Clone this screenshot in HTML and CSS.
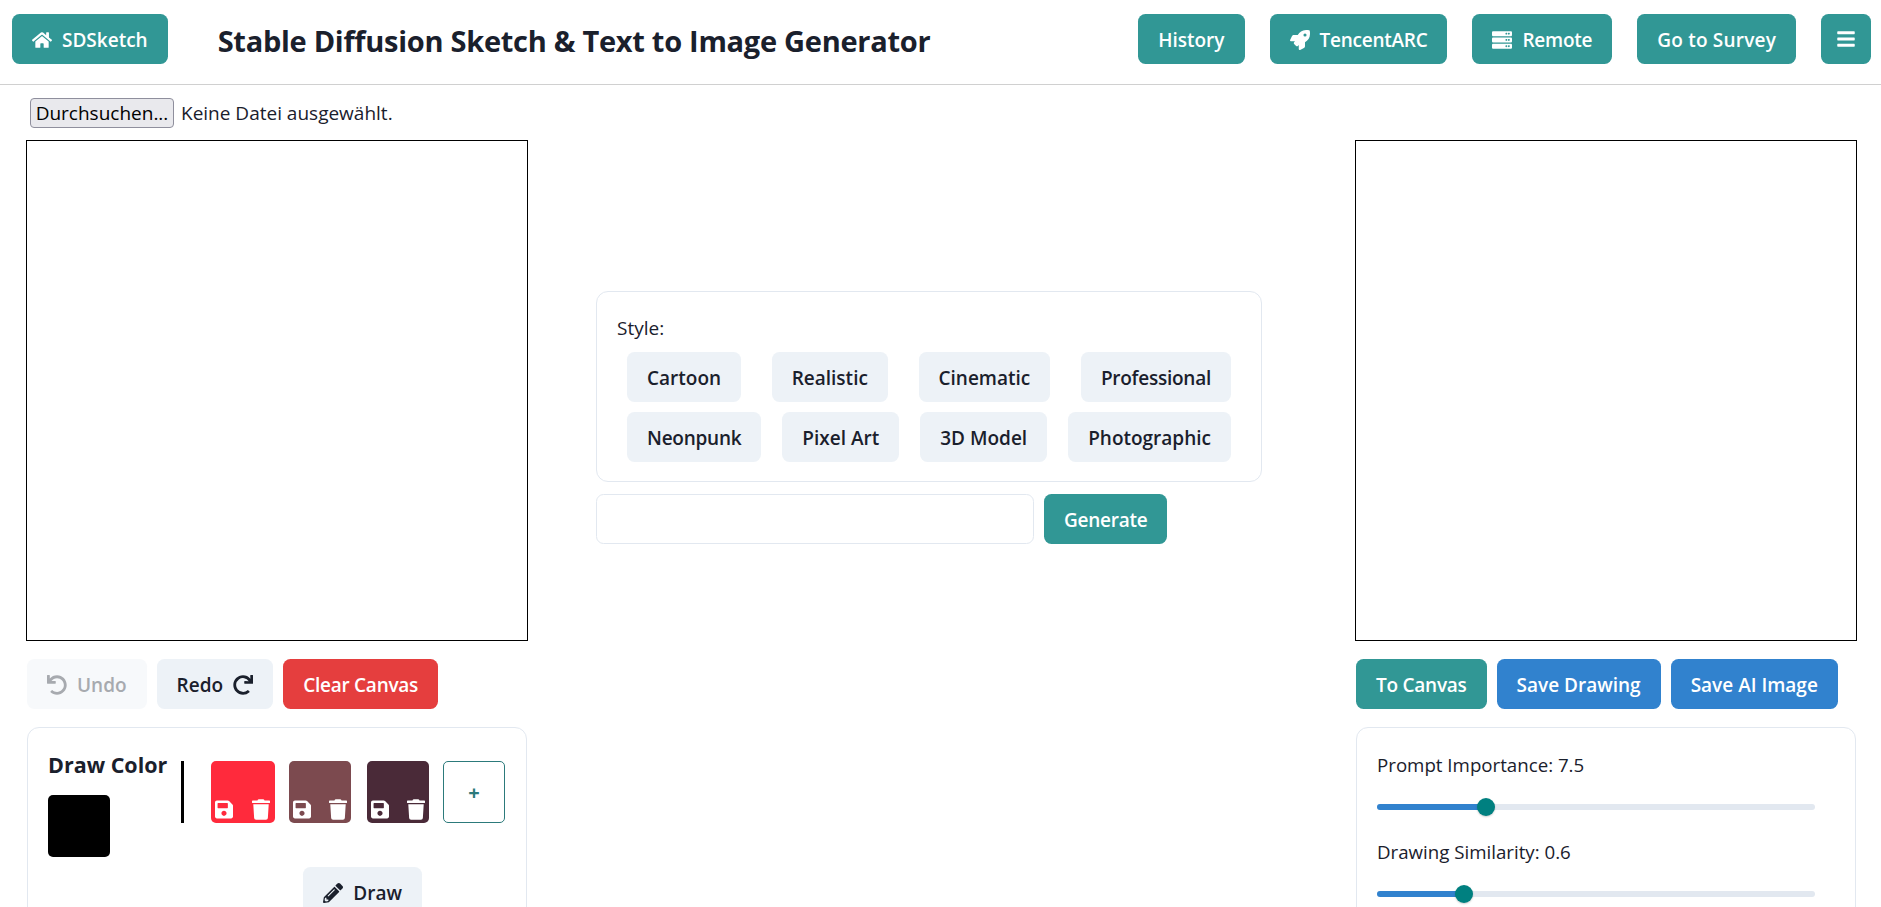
FILE: index.html
```html
<!DOCTYPE html>
<html lang="en">
<head>
<meta charset="utf-8">
<title>SDSketch</title>
<link rel="stylesheet" href="styles.css">
</head>
<body>
<nav class="navbar">
  <div class="nav-left">
    <button class="btn teal"><svg class="ico ico-home" viewBox="0 0 576 512"><path d="M280.37 148.26L96 300.11V464a16 16 0 0 0 16 16l112.06-.29a16 16 0 0 0 15.92-16V368a16 16 0 0 1 16-16h64a16 16 0 0 1 16 16v95.64a16 16 0 0 0 16 16.05L464 480a16 16 0 0 0 16-16V300L295.67 148.26a12.19 12.19 0 0 0-15.3 0zM571.6 251.47L488 182.56V44.05a12 12 0 0 0-12-12h-56a12 12 0 0 0-12 12v72.61L318.47 43a48 48 0 0 0-61 0L4.34 251.47a12 12 0 0 0-1.6 16.9l25.5 31A12 12 0 0 0 45.15 301l235.22-193.74a12.19 12.19 0 0 1 15.3 0L530.9 301a12 12 0 0 0 16.9-1.6l25.5-31a12 12 0 0 0-1.7-16.93z"/></svg>SDSketch</button>
    <h1 class="title">Stable Diffusion Sketch &amp; Text to Image Generator</h1>
  </div>
  <div class="nav-right">
    <button class="btn teal">History</button>
    <button class="btn teal tight"><svg class="ico" viewBox="0 0 512 512"><path d="M505.12019,19.09375c-1.18945-5.53125-6.65819-11-12.207-12.1875C460.716,0,435.507,0,410.40747,0,307.17523,0,245.26909,55.20312,199.05238,128H94.83772c-16.34763.01562-35.55658,11.875-42.88664,26.48438L2.51562,253.29688A28.4,28.4,0,0,0,0,264a24.00867,24.00867,0,0,0,24.00582,24H127.81618l-22.47457,22.46875c-11.36521,11.36133-12.99607,32.25781,0,45.25L156.24582,406.625c11.15623,11.1875,32.15619,13.15625,45.27726,0l22.47457-22.46875V488a24.00867,24.00867,0,0,0,24.00581,24,28.55934,28.55934,0,0,0,10.707-2.51562l98.72834-49.39063c14.62888-7.29687,26.50776-26.5,26.50776-42.85937V312.79688c72.59753-46.3125,128.03493-108.40626,128.03493-211.09376C512.07526,76.5,512.07526,51.29688,505.12019,19.09375ZM384.04033,168A40,40,0,1,1,424.05,128,40.02322,40.02322,0,0,1,384.04033,168Z"/></svg>TencentARC</button>
    <button class="btn teal tight"><svg class="ico" viewBox="0 0 512 512"><path d="M480 160H32c-17.673 0-32-14.327-32-32V64c0-17.673 14.327-32 32-32h448c17.673 0 32 14.327 32 32v64c0 17.673-14.327 32-32 32zm-48-88c-13.255 0-24 10.745-24 24s10.745 24 24 24 24-10.745 24-24-10.745-24-24-24zm-64 0c-13.255 0-24 10.745-24 24s10.745 24 24 24 24-10.745 24-24-10.745-24-24-24zm112 248H32c-17.673 0-32-14.327-32-32v-64c0-17.673 14.327-32 32-32h448c17.673 0 32 14.327 32 32v64c0 17.673-14.327 32-32 32zm-48-88c-13.255 0-24 10.745-24 24s10.745 24 24 24 24-10.745 24-24-10.745-24-24-24zm-64 0c-13.255 0-24 10.745-24 24s10.745 24 24 24 24-10.745 24-24-10.745-24-24-24zm112 248H32c-17.673 0-32-14.327-32-32v-64c0-17.673 14.327-32 32-32h448c17.673 0 32 14.327 32 32v64c0 17.673-14.327 32-32 32zm-48-88c-13.255 0-24 10.745-24 24s10.745 24 24 24 24-10.745 24-24-10.745-24-24-24zm-64 0c-13.255 0-24 10.745-24 24s10.745 24 24 24 24-10.745 24-24-10.745-24-24-24z"/></svg>Remote</button>
    <button class="btn teal wide">Go to Survey</button>
    <button class="btn teal btn-menu"><svg class="ico-bars" viewBox="0 0 448 512"><path d="M16 132h416c8.837 0 16-7.163 16-16V76c0-8.837-7.163-16-16-16H16C7.163 60 0 67.163 0 76v40c0 8.837 7.163 16 16 16zm0 160h416c8.837 0 16-7.163 16-16v-40c0-8.837-7.163-16-16-16H16c-8.837 0-16 7.163-16 16v40c0 8.837 7.163 16 16 16zm0 160h416c8.837 0 16-7.163 16-16v-40c0-8.837-7.163-16-16-16H16c-8.837 0-16 7.163-16 16v40c0 8.837 7.163 16 16 16z"/></svg></button>
  </div>
</nav>

<div class="file-row">
  <button class="file-btn">Durchsuchen...</button>
  <span class="file-label">Keine Datei ausgewählt.</span>
</div>

<main class="workspace">
  <section class="col">
    <div class="canvas"></div>
    <div class="btn-row">
      <button class="btn disabled"><svg class="ico" viewBox="0 0 512 512"><path d="M212.333 224.333H12c-6.627 0-12-5.373-12-12V12C0 5.373 5.373 0 12 0h48c6.627 0 12 5.373 12 12v78.112C117.773 39.279 184.26 7.47 258.175 8.007c136.906.994 246.448 111.623 246.157 248.532C504.041 393.258 393.12 504 256.333 504c-64.089 0-122.496-24.313-166.51-64.215-5.099-4.622-5.334-12.554-.467-17.42l33.967-33.967c4.474-4.474 11.662-4.717 16.401-.525C170.76 415.336 211.58 432 256.333 432c97.268 0 176-78.716 176-176 0-97.267-78.716-176-176-176-58.496 0-110.28 28.476-142.274 72.333h98.274c6.627 0 12 5.373 12 12v48c0 6.627-5.373 12-12 12z"/></svg>Undo</button>
      <button class="btn gray">Redo<svg class="ico ico-after" viewBox="0 0 512 512"><path d="M500.33 0h-47.41a12 12 0 0 0-12 12.57l4 82.76A247.42 247.42 0 0 0 256 8C119.34 8 7.9 119.53 8 256.19 8.1 393.07 119.1 504 256 504a247.1 247.1 0 0 0 166.18-63.91 12 12 0 0 0 .48-17.43l-34-34a12 12 0 0 0-16.38-.55A176 176 0 1 1 402.1 157.8l-101.53-4.87a12 12 0 0 0-12.57 12v47.41a12 12 0 0 0 12 12h200.33a12 12 0 0 0 12-12V12a12 12 0 0 0-12-12z"/></svg></button>
      <button class="btn red tight">Clear Canvas</button>
    </div>
    <div class="card draw-card">
      <div class="draw-top">
        <div class="draw-color">
          <div class="draw-title">Draw Color</div>
          <div class="swatch black"></div>
        </div>
        <div class="divider"></div>
        <div class="swatch saved s1"><svg class="mini" viewBox="0 0 448 512"><path d="M433.941 129.941l-83.882-83.882A48 48 0 0 0 316.118 32H48C21.49 32 0 53.49 0 80v352c0 26.51 21.49 48 48 48h352c26.51 0 48-21.49 48-48V163.882a48 48 0 0 0-14.059-33.941zM224 416c-35.346 0-64-28.654-64-64 0-35.346 28.654-64 64-64s64 28.654 64 64c0 35.346-28.654 64-64 64zm96-304.52V212c0 6.627-5.373 12-12 12H76c-6.627 0-12-5.373-12-12V108c0-6.627 5.373-12 12-12h228.52c3.183 0 6.235 1.264 8.485 3.515l3.48 3.48A11.996 11.996 0 0 1 320 111.48z"/></svg><svg class="mini" viewBox="0 0 448 512"><path d="M432 32H312l-9.4-18.7A24 24 0 0 0 281.1 0H166.8a23.72 23.72 0 0 0-21.4 13.3L136 32H16A16 16 0 0 0 0 48v32a16 16 0 0 0 16 16h416a16 16 0 0 0 16-16V48a16 16 0 0 0-16-16zM53.2 467a48 48 0 0 0 47.9 45h245.8a48 48 0 0 0 47.9-45L416 128H32z"/></svg></div>
        <div class="swatch saved s2"><svg class="mini" viewBox="0 0 448 512"><path d="M433.941 129.941l-83.882-83.882A48 48 0 0 0 316.118 32H48C21.49 32 0 53.49 0 80v352c0 26.51 21.49 48 48 48h352c26.51 0 48-21.49 48-48V163.882a48 48 0 0 0-14.059-33.941zM224 416c-35.346 0-64-28.654-64-64 0-35.346 28.654-64 64-64s64 28.654 64 64c0 35.346-28.654 64-64 64zm96-304.52V212c0 6.627-5.373 12-12 12H76c-6.627 0-12-5.373-12-12V108c0-6.627 5.373-12 12-12h228.52c3.183 0 6.235 1.264 8.485 3.515l3.48 3.48A11.996 11.996 0 0 1 320 111.48z"/></svg><svg class="mini" viewBox="0 0 448 512"><path d="M432 32H312l-9.4-18.7A24 24 0 0 0 281.1 0H166.8a23.72 23.72 0 0 0-21.4 13.3L136 32H16A16 16 0 0 0 0 48v32a16 16 0 0 0 16 16h416a16 16 0 0 0 16-16V48a16 16 0 0 0-16-16zM53.2 467a48 48 0 0 0 47.9 45h245.8a48 48 0 0 0 47.9-45L416 128H32z"/></svg></div>
        <div class="swatch saved s3"><svg class="mini" viewBox="0 0 448 512"><path d="M433.941 129.941l-83.882-83.882A48 48 0 0 0 316.118 32H48C21.49 32 0 53.49 0 80v352c0 26.51 21.49 48 48 48h352c26.51 0 48-21.49 48-48V163.882a48 48 0 0 0-14.059-33.941zM224 416c-35.346 0-64-28.654-64-64 0-35.346 28.654-64 64-64s64 28.654 64 64c0 35.346-28.654 64-64 64zm96-304.52V212c0 6.627-5.373 12-12 12H76c-6.627 0-12-5.373-12-12V108c0-6.627 5.373-12 12-12h228.52c3.183 0 6.235 1.264 8.485 3.515l3.48 3.48A11.996 11.996 0 0 1 320 111.48z"/></svg><svg class="mini" viewBox="0 0 448 512"><path d="M432 32H312l-9.4-18.7A24 24 0 0 0 281.1 0H166.8a23.72 23.72 0 0 0-21.4 13.3L136 32H16A16 16 0 0 0 0 48v32a16 16 0 0 0 16 16h416a16 16 0 0 0 16-16V48a16 16 0 0 0-16-16zM53.2 467a48 48 0 0 0 47.9 45h245.8a48 48 0 0 0 47.9-45L416 128H32z"/></svg></div>
        <div class="swatch add">+</div>
      </div>
      <div class="draw-tools">
        <button class="btn gray"><svg class="ico" viewBox="0 0 512 512"><path d="M497.9 142.1l-46.1 46.1c-4.7 4.7-12.3 4.7-17 0l-111-111c-4.7-4.7-4.7-12.3 0-17l46.1-46.1c18.7-18.7 49.1-18.7 67.9 0l60.1 60.1c18.8 18.7 18.8 49.1 0 67.9zM284.2 99.8L21.6 362.4.4 483.9c-2.9 16.4 11.4 30.6 27.8 27.8l121.5-21.3 262.6-262.6c4.7-4.7 4.7-12.3 0-17l-111-111c-4.8-4.7-12.4-4.7-17.1 0zM124.1 339.9c-5.5-5.5-5.5-14.3 0-19.8l154-154c5.5-5.5 14.3-5.5 19.8 0s5.5 14.3 0 19.8l-154 154c-5.5 5.5-14.3 5.5-19.8 0zM88 424h48v36.3l-64.5 11.3-31.1-31.1L51.7 376H88v48z"/></svg>Draw</button>
      </div>
    </div>
  </section>

  <section class="center">
    <div class="card style-card">
      <div class="style-label">Style:</div>
      <div class="style-row">
        <button class="btn gray">Cartoon</button>
        <button class="btn gray">Realistic</button>
        <button class="btn gray">Cinematic</button>
        <button class="btn gray tight">Professional</button>
      </div>
      <div class="style-row">
        <button class="btn gray tight">Neonpunk</button>
        <button class="btn gray">Pixel Art</button>
        <button class="btn gray">3D Model</button>
        <button class="btn gray">Photographic</button>
      </div>
    </div>
    <div class="prompt-row">
      <input class="prompt" type="text">
      <button class="btn teal tight">Generate</button>
    </div>
  </section>

  <section class="col">
    <div class="canvas"></div>
    <div class="btn-row">
      <button class="btn teal tight">To Canvas</button>
      <button class="btn blue">Save Drawing</button>
      <button class="btn blue">Save AI Image</button>
    </div>
    <div class="card slider-card">
      <div class="slider-label">Prompt Importance: 7.5</div>
      <div class="slider"><div class="fill" style="width:24.8%"></div><div class="thumb" style="left:24.8%"></div></div>
      <div class="slider-label">Drawing Similarity: 0.6</div>
      <div class="slider"><div class="fill" style="width:19.8%"></div><div class="thumb" style="left:19.8%"></div></div>
    </div>
  </section>
</main>
</body>
</html>
```

FILE: styles.css
```css
* { box-sizing: border-box; }
html, body { margin: 0; height: 907px; overflow: hidden; background: #fff; }
body { font-family: "Open Sans", "Noto Sans", sans-serif; font-size: 19px; color: #1a202c; }
button { font-family: inherit; }

.navbar { display: flex; justify-content: space-between; align-items: flex-start; height: 85px; padding: 14px 10px 0 12px; border-bottom: 1px solid #d0d0d0; }
.nav-left { display: flex; align-items: center; gap: 50px; }
.nav-right { display: flex; align-items: center; gap: 25px; }
.title { margin: 0; padding-top: 2px; font-size: 29px; font-weight: 700; white-space: nowrap; letter-spacing: -0.28px; }

.btn { display: inline-flex; align-items: center; justify-content: center; height: 50px; padding: 2px 20px 0; border: 0; border-radius: 7.5px; font-size: 19px; font-weight: 600; white-space: nowrap; }
.tight { letter-spacing: -0.25px; }
.wide { letter-spacing: 0.2px; }
.teal { background: #319795; color: #fff; }
.blue { background: #3182ce; color: #fff; }
.red { background: #e53e3e; color: #fff; }
.gray { background: #edf2f7; color: #1a202c; }
.disabled { background: #f7f9fb; color: #a7aaaf; }
.btn-menu { width: 50px; padding: 0; }
.ico { width: 20px; height: 20px; margin-right: 10px; fill: currentColor; }
.ico-home { width: 20px; }
.ico-after { margin: 0 0 0 10px; }
.ico-bars { width: 18px; height: 20px; fill: #fff; }

.file-row { display: flex; align-items: center; gap: 7px; height: 55px; padding: 0 0 0 30px; }
.file-btn { width: 144px; height: 30px; padding: 0; background: #e9e9ed; border: 1px solid #8f8f9d; border-radius: 4px; font-size: 19px; color: #000; }
.file-label { font-size: 19px; }

.workspace { display: grid; grid-template-columns: 502px 1fr 502px; padding: 0 24px 0 26px; }
.canvas { width: 502px; height: 501px; border: 1px solid #000; }
.btn-row { display: flex; gap: 10px; margin: 18px 0 0 1px; }
.card { border: 1px solid #e2e8f0; border-radius: 12px; }
.draw-card { margin: 18px 0 0 1px; padding: 33px 20px 0; width: 500px; height: 300px; }
.slider-card { margin: 18px 0 0 1px; padding: 24px 20px 0; width: 500px; height: 300px; }

.draw-top { display: flex; align-items: flex-start; }
.draw-color { width: 113px; margin-right: 20px; }
.draw-title { font-size: 21.5px; font-weight: 700; line-height: 28px; margin-top: -10px; white-space: nowrap; }
.swatch { width: 62px; height: 62px; border-radius: 5px; }
.black { background: #000; margin-top: 16px; }
.divider { width: 3px; height: 62px; background: #000; margin-right: 27px; }
.saved { display: flex; align-items: flex-end; justify-content: space-between; padding: 0 4px 3px; margin-right: 16px; }
.s1 { background: #ff2a3c; width: 64px; margin-right: 14px; padding-right: 5px; }
.s2 { background: #7c4a4f; }
.s3 { background: #4a2a38; margin-right: 14px; }
.mini { width: 18px; height: 21px; fill: #fff; }
.add { display: flex; align-items: center; justify-content: center; border: 1px solid #2c7a7b; color: #2c7a7b; font-size: 20px; font-weight: 700; }
.draw-tools { display: flex; justify-content: flex-end; margin: 10px 84px 0 0; }

.center { padding: 151px 0 0 68px; width: 733px; }
.style-card { width: 666px; height: 191px; padding: 23px 30px 0 20px; }
.style-label { line-height: 26px; margin-bottom: 11px; }
.style-row { display: flex; justify-content: space-between; margin: 0 0 10px 10px; }
.prompt-row { display: flex; gap: 10px; margin-top: 12px; }
.prompt { width: 438px; height: 50px; border: 1px solid #e2e8f0; border-radius: 7.5px; background: #fff; }

.slider-label { font-size: 18.7px; line-height: 26px; }
.slider { position: relative; width: 438px; height: 6px; margin: 26px 0 29px; background: #e2e8f0; border-radius: 3px; }
.fill { position: absolute; left: 0; top: 0; bottom: 0; background: #3182ce; border-radius: 3px; }
.thumb { position: absolute; top: -6px; width: 18px; height: 18px; margin-left: -9px; background: #008080; border-radius: 50%; box-shadow: 0 1px 2px rgba(0,0,0,.2); }
```
